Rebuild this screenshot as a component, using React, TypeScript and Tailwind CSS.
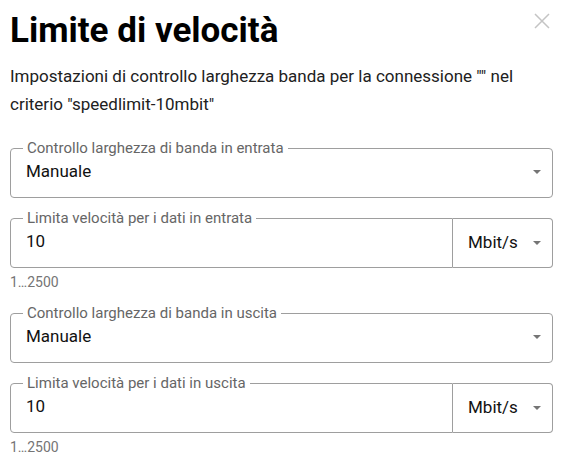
import React from 'react';

const Caret: React.FC = () => (
  <svg width="8" height="4" viewBox="0 0 8 4" className="shrink-0">
    <path d="M0 0 L8 0 L4 4 Z" fill="#757575" />
  </svg>
);

interface SelectFieldProps {
  label: string;
  value: string;
}

const SelectField: React.FC<SelectFieldProps> = ({ label, value }) => (
  <fieldset className="border border-[#9e9e9e] rounded-[4px] pl-[15px] pr-[11px] pb-[10px] m-0 min-w-0">
    <legend className="ml-[-3px] px-[4px] text-[15px] leading-[16px] text-[#666666]">{label}</legend>
    <div className="flex items-center h-[31px]">
      <span className="flex-1 text-[17px] text-[#111111]">{value}</span>
      <Caret />
    </div>
  </fieldset>
);

interface RateFieldProps {
  label: string;
  value: string;
  unit: string;
}

const RateField: React.FC<RateFieldProps> = ({ label, value, unit }) => (
  <div className="flex items-end">
    <fieldset className="flex-1 border border-[#9e9e9e] rounded-l-[4px] pl-[15px] pr-[10px] pb-[10px] m-0 min-w-0">
      <legend className="ml-[-3px] px-[4px] text-[15px] leading-[16px] text-[#666666]">{label}</legend>
      <div className="flex items-center h-[31px]">
        <span className="text-[17px] text-[#111111]">{value}</span>
      </div>
    </fieldset>
    <div className="w-[100px] h-[50px] border border-l-0 border-[#9e9e9e] rounded-r-[4px] flex items-center pl-[15px] pr-[11px]">
      <span className="flex-1 text-[17px] text-[#111111]">{unit}</span>
      <Caret />
    </div>
  </div>
);

const Hint: React.FC<{ text: string }> = ({ text }) => (
  <div className="mt-[6px] text-[14px] leading-[16px] text-[#757575]">{text}</div>
);

export default function App() {
  return (
    <div
      className="w-[565px] h-[469px] bg-white overflow-hidden pl-[10px] pr-[12px]"
      style={{ fontFamily: 'Roboto, "Liberation Sans", sans-serif' }}
    >
      <div className="flex items-start justify-between pt-[11px]">
        <h1 className="text-[35px] leading-[40px] font-bold text-black">Limite di velocità</h1>
        <button className="mt-[2px] mr-[3px] text-[#c4c4c4]" aria-label="Chiudi">
          <svg width="16" height="16" viewBox="0 0 16 16">
            <path d="M1 1 L15 15 M15 1 L1 15" stroke="currentColor" strokeWidth="1.5" />
          </svg>
        </button>
      </div>

      <p className="mt-[11px] text-[17px] leading-[28px] text-[#212121]">
        Impostazioni di controllo larghezza banda per la connessione "" nel criterio "speedlimit-10mbit"
      </p>

      <div className="mt-[22px] flex flex-col">
        <SelectField label="Controllo larghezza di banda in entrata" value="Manuale" />
        <div className="mt-[12px]">
          <RateField label="Limita velocità per i dati in entrata" value="10" unit="Mbit/s" />
        </div>
        <Hint text="1…2500" />
        <div className="mt-[15px]">
          <SelectField label="Controllo larghezza di banda in uscita" value="Manuale" />
        </div>
        <div className="mt-[12px]">
          <RateField label="Limita velocità per i dati in uscita" value="10" unit="Mbit/s" />
        </div>
        <Hint text="1…2500" />
      </div>
    </div>
  );
}
